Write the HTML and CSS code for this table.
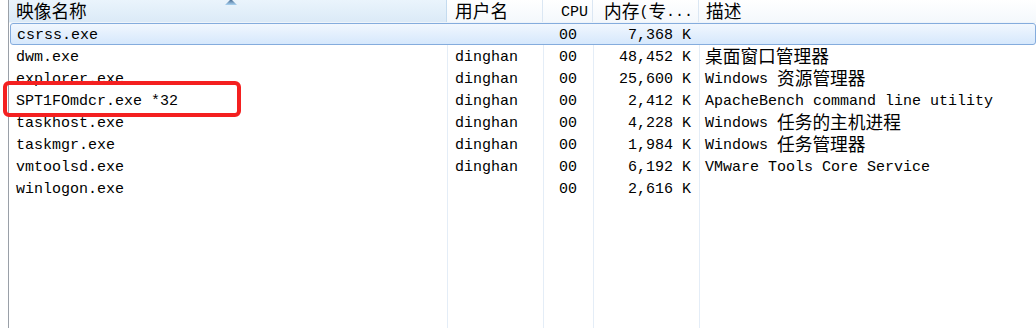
FILE: index.html
```html
<!DOCTYPE html>
<html>
<head>
<meta charset="utf-8">
<link rel="stylesheet" href="styles.css">
</head>
<body>
<div class="list">
  <div class="head">
    <div class="hc c-name sorted"><span class="cjk">映像名称</span><svg class="sort" width="14" height="6" viewBox="0 0 14 6"><defs><linearGradient id="g" x1="0" y1="0" x2="0" y2="1"><stop offset="0" stop-color="#3c5f86"/><stop offset="1" stop-color="#a9d3f3"/></linearGradient></defs><path d="M7 0 L13 6 L1 6 Z" fill="url(#g)"/></svg></div>
    <div class="hc c-user"><span class="cjk">用户名</span></div>
    <div class="hc c-cpu">CPU</div>
    <div class="hc c-mem"><span class="cjk">内存</span>(<span class="cjk">专</span>...</div>
    <div class="hc c-desc"><span class="cjk">描述</span></div>
  </div>
  <div class="rows">
    <div class="row sel">
      <div class="c-name">csrss.exe</div><div class="c-user"></div><div class="c-cpu">00</div><div class="c-mem">7,368 K</div><div class="c-desc"></div>
    </div>
    <div class="row">
      <div class="c-name">dwm.exe</div><div class="c-user">dinghan</div><div class="c-cpu">00</div><div class="c-mem">48,452 K</div><div class="c-desc"><span class="cjk">桌面窗口管理器</span></div>
    </div>
    <div class="row">
      <div class="c-name">explorer.exe</div><div class="c-user">dinghan</div><div class="c-cpu">00</div><div class="c-mem">25,600 K</div><div class="c-desc">Windows <span class="cjk">资源管理器</span></div>
    </div>
    <div class="row">
      <div class="c-name">SPT1FOmdcr.exe *32</div><div class="c-user">dinghan</div><div class="c-cpu">00</div><div class="c-mem">2,412 K</div><div class="c-desc">ApacheBench command line utility</div>
    </div>
    <div class="row">
      <div class="c-name">taskhost.exe</div><div class="c-user">dinghan</div><div class="c-cpu">00</div><div class="c-mem">4,228 K</div><div class="c-desc">Windows <span class="cjk">任务的主机进程</span></div>
    </div>
    <div class="row">
      <div class="c-name">taskmgr.exe</div><div class="c-user">dinghan</div><div class="c-cpu">00</div><div class="c-mem">1,984 K</div><div class="c-desc">Windows <span class="cjk">任务管理器</span></div>
    </div>
    <div class="row">
      <div class="c-name">vmtoolsd.exe</div><div class="c-user">dinghan</div><div class="c-cpu">00</div><div class="c-mem">6,192 K</div><div class="c-desc">VMware Tools Core Service</div>
    </div>
    <div class="row">
      <div class="c-name">winlogon.exe</div><div class="c-user"></div><div class="c-cpu">00</div><div class="c-mem">2,616 K</div><div class="c-desc"></div>
    </div>
  </div>
</div>
<div class="highlight"></div>
</body>
</html>
```
FILE: styles.css
```css
html, body {
  margin: 0;
  padding: 0;
  background: #fff;
  height: 328px;
  overflow: hidden;
}
body {
  position: relative;
  font-family: "Liberation Mono", "Noto Sans CJK SC", monospace;
  font-size: 15px;
  color: #000;
}
.cjk {
  font-family: "Noto Sans CJK SC", sans-serif;
  font-size: 17.7px;
  line-height: 0;
  vertical-align: -2px;
}
.list {
  margin-left: 8px;
  border-left: 1px solid #9aa0a8;
  height: 328px;
  display: flex;
  flex-direction: column;
}
.head, .row {
  display: grid;
  grid-template-columns: 438px 96px 50px 106px 1fr;
  grid-template-rows: 100%;
}
.head {
  box-sizing: border-box;
  height: 23px;
  border-bottom: 1px solid #eef4fa;
  background: linear-gradient(#ffffff, #f4f8fc);
  white-space: nowrap;
}
.hc {
  position: relative;
  box-sizing: border-box;
  padding-top: 4px;
  line-height: 18px;
  border-right: 1px solid #dbe7f3;
}
.hc.sorted {
  background: linear-gradient(#eaf4fc, #dbeaf7);
  border-right-color: #c4dbef;
}
.sort {
  position: absolute;
  left: 215px;
  top: -1px;
}
.rows {
  flex: 1;
  background:
    linear-gradient(#e4edf7, #e4edf7) 438px 0 / 1px 100% no-repeat,
    linear-gradient(#e4edf7, #e4edf7) 534px 0 / 1px 100% no-repeat,
    linear-gradient(#e4edf7, #e4edf7) 584px 0 / 1px 100% no-repeat,
    linear-gradient(#e4edf7, #e4edf7) 690px 0 / 1px 100% no-repeat;
}
.row {
  box-sizing: border-box;
  height: 22px;
  padding-top: 4px;
  line-height: 18px;
  white-space: nowrap;
}
.row.sel {
  padding-top: 3px;
  margin-left: 1px;
  border: 1px solid #84acdd;
  border-radius: 3px;
  background: linear-gradient(#f1f7fe, #d6e8fc);
  grid-template-columns: 436px 96px 50px 106px 1fr;
}
.c-name { padding-left: 7px; }
.row.sel .c-name { padding-left: 6px; }
.c-user { padding-left: 8px; }
.c-cpu { padding-left: 16px; }
.hc.c-cpu { padding-left: 18px; }
.c-mem { text-align: right; padding-right: 8px; }
.hc.c-mem { text-align: left; padding-left: 11px; padding-right: 0; }
.c-desc { padding-left: 6px; }
.hc.c-desc { padding-left: 7px; border-right: none; }
.highlight {
  position: absolute;
  left: 3px;
  top: 81px;
  width: 230px;
  height: 28px;
  border: 4px solid #f42020;
  border-radius: 6px;
  pointer-events: none;
}
```
